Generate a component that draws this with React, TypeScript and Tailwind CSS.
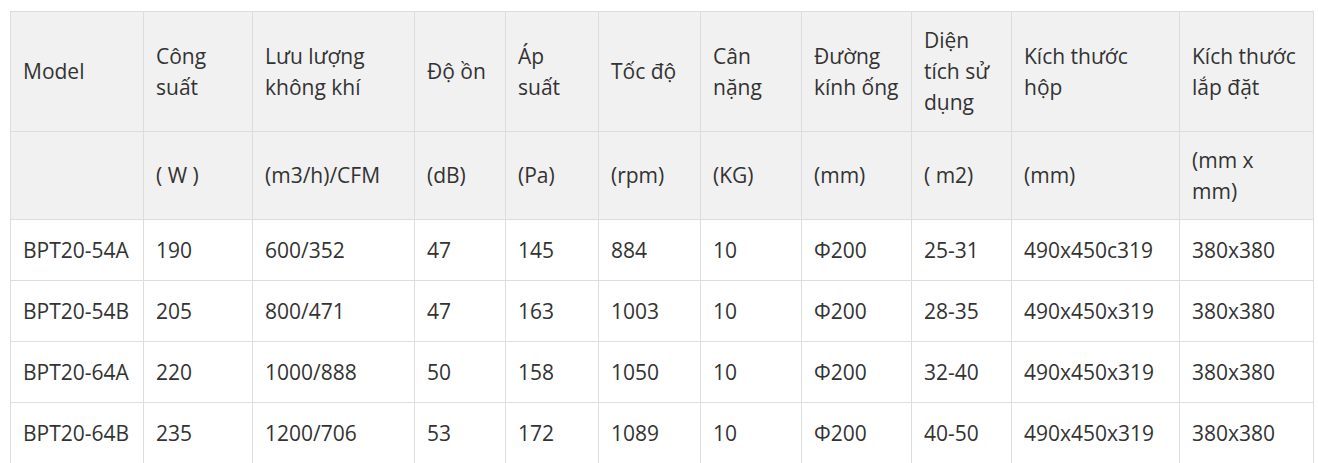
const head1 = [
  "Model",
  "Công suất",
  "Lưu lượng không khí",
  "Độ ồn",
  "Áp suất",
  "Tốc độ",
  "Cân nặng",
  "Đường kính ống",
  "Diện tích sử dụng",
  "Kích thước hộp",
  "Kích thước lắp đặt",
];

const head2 = ["", "( W )", "(m3/h)/CFM", "(dB)", "(Pa)", "(rpm)", "(KG)", "(mm)", "( m2)", "(mm)", "(mm x mm)"];

const rows = [
  ["BPT20-54A", "190", "600/352", "47", "145", "884", "10", "Φ200", "25-31", "490x450c319", "380x380"],
  ["BPT20-54B", "205", "800/471", "47", "163", "1003", "10", "Φ200", "28-35", "490x450x319", "380x380"],
  ["BPT20-64A", "220", "1000/888", "50", "158", "1050", "10", "Φ200", "32-40", "490x450x319", "380x380"],
  ["BPT20-64B", "235", "1200/706", "53", "172", "1089", "10", "Φ200", "40-50", "490x450x319", "380x380"],
];

const cols = [
  "w-[133px]",
  "w-[109px]",
  "w-[162px]",
  "w-[91px]",
  "w-[93px]",
  "w-[102px]",
  "w-[101px]",
  "w-[110px]",
  "w-[100px]",
  "w-[168px]",
  "w-[134px]",
];

export default function App() {
  return (
    <div className="bg-white h-[463px] overflow-hidden pt-[11px] pl-[10px]">
      <table
        className="table-fixed border-collapse w-[1304px] text-[21px] leading-[31px] text-[#333]"
        style={{ fontFamily: '"Open Sans", "Noto Sans", sans-serif' }}
      >
        <colgroup>
          {cols.map((c, i) => (
            <col key={i} className={c} />
          ))}
        </colgroup>
        <thead>
          <tr className="h-[120px] bg-[#f1f1f1]">
            {head1.map((h, i) => (
              <td key={i} className="border border-[#dddddd] px-[12px] py-0 align-middle font-normal">
                {h}
              </td>
            ))}
          </tr>
          <tr className="h-[88px] bg-[#f1f1f1]">
            {head2.map((h, i) => (
              <td key={i} className="border border-[#dddddd] px-[12px] py-0 align-middle">
                {h}
              </td>
            ))}
          </tr>
        </thead>
        <tbody>
          {rows.map((r, ri) => (
            <tr key={ri} className="h-[61px]">
              {r.map((c, ci) => (
                <td key={ci} className="border border-[#dddddd] px-[12px] py-0 align-middle">
                  {c}
                </td>
              ))}
            </tr>
          ))}
        </tbody>
      </table>
    </div>
  );
}
